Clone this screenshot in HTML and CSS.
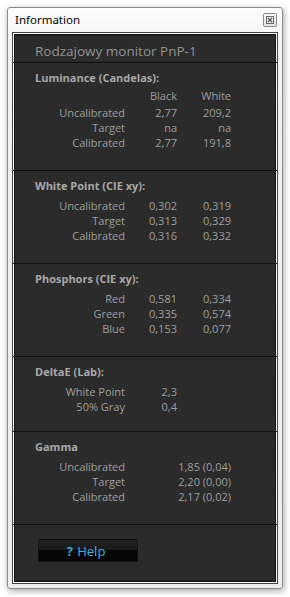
FILE: index.html
```html
<!DOCTYPE html>
<html lang="en">
<head>
  <meta charset="UTF-8">
  <title>Information</title>
  <link rel="stylesheet" href="styles.css">
</head>
<body>
  <div class="window">
    <div class="titlebar">
      <span class="title">Information</span>
      <span class="close">
        <svg width="14" height="14" viewBox="0 0 14 14">
          <rect x="3.5" y="3.5" width="7" height="7" fill="none" stroke="#6a6a6a"/>
          <path d="M5 5 L9 9 M9 5 L5 9" stroke="#555" stroke-width="1.3"/>
        </svg>
      </span>
    </div>

    <div class="panel">
      <div class="monitor">Rodzajowy monitor PnP-1</div>

      <div class="section">
        <h2>Luminance (Candelas):</h2>
        <div class="grid head">
          <span></span><span>Black</span><span>White</span>
        </div>
        <div class="grid">
          <span>Uncalibrated</span><span>2,77</span><span>209,2</span>
          <span>Target</span><span>na</span><span>na</span>
          <span>Calibrated</span><span>2,77</span><span>191,8</span>
        </div>
      </div>

      <div class="section">
        <h2>White Point (CIE xy):</h2>
        <div class="grid">
          <span>Uncalibrated</span><span>0,302</span><span>0,319</span>
          <span>Target</span><span>0,313</span><span>0,329</span>
          <span>Calibrated</span><span>0,316</span><span>0,332</span>
        </div>
      </div>

      <div class="section">
        <h2>Phosphors (CIE xy):</h2>
        <div class="grid">
          <span>Red</span><span>0,581</span><span>0,334</span>
          <span>Green</span><span>0,335</span><span>0,574</span>
          <span>Blue</span><span>0,153</span><span>0,077</span>
        </div>
      </div>

      <div class="section short">
        <h2>DeltaE (Lab):</h2>
        <div class="grid">
          <span>White Point</span><span>2,3</span><span></span>
          <span>50% Gray</span><span>0,4</span><span></span>
        </div>
      </div>

      <div class="section">
        <h2>Gamma</h2>
        <div class="grid">
          <span>Uncalibrated</span><span class="wide">1,85 (0,04)</span>
          <span>Target</span><span class="wide">2,20 (0,00)</span>
          <span>Calibrated</span><span class="wide">2,17 (0,02)</span>
        </div>
      </div>

      <div class="footer">
        <button class="help"><b>?</b> Help</button>
      </div>
    </div>
  </div>
</body>
</html>
```

FILE: styles.css
```css
body {
  margin: 0;
  padding: 7px;
  background-color: #ffffff;
  font-family: "Open Sans", "Noto Sans", sans-serif;
}

.window {
  width: 276px;
  height: 582px;
  box-sizing: border-box;
  border: 1px solid #8c8c8c;
  border-radius: 3px;
  padding: 0 4px 4px;
  background: linear-gradient(to bottom, #fdfdfd 0%, #f1f1f1 40px, #ececec 100%);
  box-shadow: 1px 2px 6px rgba(0, 0, 0, 0.35);
}

.titlebar {
  height: 24px;
  display: flex;
  align-items: center;
  justify-content: space-between;
}

.title {
  font-family: "Noto Sans", sans-serif;
  font-size: 11.5px;
  color: #000;
  margin-left: 3px;
  margin-top: -1px;
}

.close {
  width: 14px;
  height: 14px;
  box-sizing: border-box;
  border: 1px solid #8a8a8a;
  border-radius: 2px;
  background: linear-gradient(to bottom, #fafafa, #e2e2e2);
  display: flex;
  align-items: center;
  justify-content: center;
  margin-right: 1px;
}

.close svg {
  display: block;
  margin: -1px;
}

.panel {
  height: 552px;
  box-sizing: border-box;
  border: 1px solid #444;
  box-shadow: inset 0 0 0 1px #ffffff, inset 0 0 0 2px #111111;
  background-color: #2b2b2b;
  font-size: 11px;
  line-height: 15px;
  color: #9e9e9e;
}

.monitor {
  padding: 11px 22px 3px;
  font-size: 13.5px;
  color: #929292;
  border-bottom: 1px solid #0e0e0e;
}

.section {
  padding: 7px 0 20px;
  border-bottom: 1px solid #0e0e0e;
}

.section.short {
  padding-bottom: 17px;
}

.section h2 {
  margin: 0 0 5px 22px;
  font-size: 11px;
  font-weight: bold;
  color: #a8a8a8;
}

.grid {
  display: grid;
  grid-template-columns: 112px 52px 54px;
  text-align: right;
}

.grid.head {
  margin-top: -2px;
  margin-bottom: 2px;
}

.grid .wide {
  grid-column: span 2;
}

.footer {
  padding: 14px 25px 0;
}

.help {
  display: block;
  width: 100px;
  height: 23px;
  padding: 0 4px 0 0;
  border: 1px solid #111;
  border-radius: 2px;
  background: linear-gradient(to bottom, #202020 0%, #1b1b1b 45%, #070707 50%, #050505 100%);
  font-family: "Open Sans", sans-serif;
  font-size: 13px;
  color: #45b2e4;
  text-align: center;
}

.help b {
  color: #38a6da;
  margin-right: 1px;
}
```
